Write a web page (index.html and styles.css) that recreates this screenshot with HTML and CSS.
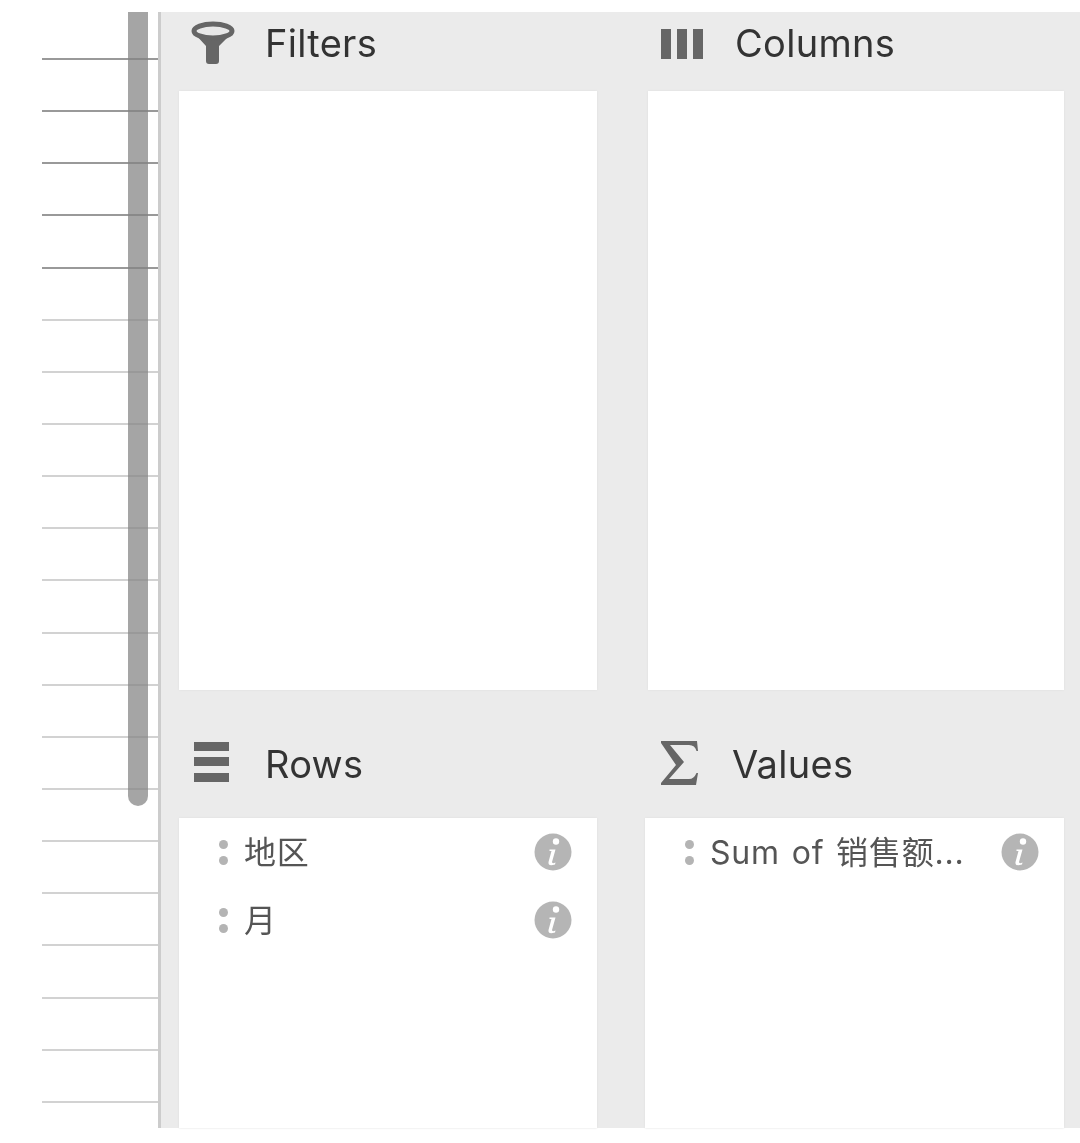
FILE: index.html
```html
<!DOCTYPE html>
<html lang="en">

<head>
    <meta charset="UTF-8">
    <title>Pivot fields</title>
    <link rel="stylesheet" href="styles.css">
</head>

<body>
    <div class="page">
        <div class="sheet">
            <div class="thumb"></div>
            <div class="line dark"></div>
            <div class="line dark"></div>
            <div class="line dark"></div>
            <div class="line dark"></div>
            <div class="line dark"></div>
            <div class="line"></div>
            <div class="line"></div>
            <div class="line"></div>
            <div class="line"></div>
            <div class="line"></div>
            <div class="line"></div>
            <div class="line"></div>
            <div class="line"></div>
            <div class="line"></div>
            <div class="line"></div>
            <div class="line"></div>
            <div class="line"></div>
            <div class="line"></div>
            <div class="line"></div>
            <div class="line"></div>
            <div class="line"></div>
        </div>
        <div class="panel">
            <div class="zone">
                <div class="zone-head">
                    <svg class="icon icon-filter" viewBox="0 0 44 44">
                        <path d="M4 13 L15 25 V40 Q15 43 18 43 H25 Q28 43 28 40 V25 L40 13 Z" fill="#666"/>
                        <ellipse cx="22" cy="10" rx="19" ry="7" fill="#e8e8e8" stroke="#666" stroke-width="5"/>
                    </svg>
                    <span>Filters</span>
                </div>
                <div class="zone-box"></div>
            </div>
            <div class="zone zone-right">
                <div class="zone-head">
                    <svg class="icon icon-columns" viewBox="0 0 42 30" fill="#666">
                        <rect x="0" y="0" width="10" height="30"/>
                        <rect x="16" y="0" width="10" height="30"/>
                        <rect x="32" y="0" width="10" height="30"/>
                    </svg>
                    <span>Columns</span>
                </div>
                <div class="zone-box columns-box"></div>
            </div>
            <div class="zone zone-low">
                <div class="zone-head">
                    <svg class="icon icon-rows" viewBox="0 0 35 40" fill="#666">
                        <rect x="0" y="0" width="35" height="9"/>
                        <rect x="0" y="15" width="35" height="9"/>
                        <rect x="0" y="31" width="35" height="9"/>
                    </svg>
                    <span>Rows</span>
                </div>
                <div class="zone-box">
                    <div class="field">
                        <span class="grip"></span>
                        <span class="field-name">地区</span>
                        <svg class="info" viewBox="0 0 38 38">
                            <circle cx="19" cy="19" r="18.5" fill="#b5b5b5"/>
                            <circle cx="22" cy="8.5" r="3.2" fill="#fff"/>
                            <path d="M15.5 16.5 H21.5 L18 29 Q18 31 21.5 29.5 L21 31.5 Q14 34 14.5 29 L17.5 18 H15.5 Z" fill="#fff"/>
                        </svg>
                    </div>
                    <div class="field">
                        <span class="grip"></span>
                        <span class="field-name">月</span>
                        <svg class="info" viewBox="0 0 38 38">
                            <circle cx="19" cy="19" r="18.5" fill="#b5b5b5"/>
                            <circle cx="22" cy="8.5" r="3.2" fill="#fff"/>
                            <path d="M15.5 16.5 H21.5 L18 29 Q18 31 21.5 29.5 L21 31.5 Q14 34 14.5 29 L17.5 18 H15.5 Z" fill="#fff"/>
                        </svg>
                    </div>
                </div>
            </div>
            <div class="zone zone-low zone-right">
                <div class="zone-head">
                    <svg class="icon icon-sum" viewBox="0 0 38 44">
                        <path d="M0 0 H36 L37 10 H35.5 Q34 4 28 4 H9 L23 21 L8 38 H28 Q33 38 35.5 32 H37 L35 44 H0 V42 L15 24 L0 2 Z" fill="#666"/>
                    </svg>
                    <span>Values</span>
                </div>
                <div class="zone-box">
                    <div class="field">
                        <span class="grip"></span>
                        <span class="field-name">Sum of 销售额...</span>
                        <svg class="info" viewBox="0 0 38 38">
                            <circle cx="19" cy="19" r="18.5" fill="#b5b5b5"/>
                            <circle cx="22" cy="8.5" r="3.2" fill="#fff"/>
                            <path d="M15.5 16.5 H21.5 L18 29 Q18 31 21.5 29.5 L21 31.5 Q14 34 14.5 29 L17.5 18 H15.5 Z" fill="#fff"/>
                        </svg>
                    </div>
                </div>
            </div>
        </div>
    </div>
</body>

</html>
```

FILE: styles.css
```css
* {
    margin: 0;
    padding: 0;
    box-sizing: border-box;
}

html,
body {
    height: 100%;
    background: #fff;
    overflow: hidden;
}

body {
    font-family: Inter, "Noto Sans CJK SC", sans-serif;
}

.page {
    display: flex;
    height: 1116px;
    margin-top: 12px;
    filter: blur(0.5px);
}

.sheet {
    position: relative;
    width: 161px;
    padding: 46px 0 0 42px;
    border-right: 3px solid #ccc;
}

.line {
    height: 2px;
    margin-bottom: 50.15px;
    background: #d2d2d2;
}

.line.dark {
    background: #999;
}

.thumb {
    position: absolute;
    top: 0;
    left: 128px;
    width: 20px;
    height: 794px;
    background: rgba(130, 130, 130, 0.72);
    border-radius: 0 0 10px 10px;
}

.panel {
    flex: 1;
    display: grid;
    grid-template-columns: 418px 419px;
    grid-template-rows: 678px 438px;
    column-gap: 48px;
    padding-left: 18px;
    background: #ebebeb;
}

.zone {
    display: flex;
    flex-direction: column;
}

.zone-low {
    padding-top: 48px;
}

.zone-head {
    display: flex;
    align-items: center;
    height: 79px;
    flex-shrink: 0;
    padding-bottom: 18px;
    font-size: 38px;
    letter-spacing: 0.3px;
    color: #333;
}

.zone-low .zone-head {
    height: 80px;
    padding-bottom: 28px;
}

.zone-box {
    flex: 1;
    background: #fff;
    box-shadow: 0 0 2px #ddd;
}

.columns-box {
    margin-left: 3px;
}

.icon {
    flex-shrink: 0;
}

.icon-filter {
    width: 44px;
    height: 44px;
    margin: 0 30px 0 12px;
}

.icon-columns {
    width: 42px;
    height: 30px;
    margin: 0 32px 0 16px;
    transform: translateY(1px);
}

.icon-rows {
    width: 35px;
    height: 40px;
    margin: 0 36px 0 15px;
    transform: translateY(-2px);
}

.icon-sum {
    width: 38px;
    height: 44px;
    margin: 0 33px 0 16px;
    transform: translateY(-1px);
}

.field {
    display: flex;
    align-items: center;
    height: 68px;
    padding: 0 25px 0 40px;
    font-size: 32px;
    color: #555;
}

.grip {
    position: relative;
    width: 9px;
    height: 25px;
    margin-right: 16px;
    flex-shrink: 0;
}

.grip::before,
.grip::after {
    content: "";
    position: absolute;
    left: 0;
    width: 9px;
    height: 9px;
    border-radius: 50%;
    background: #b4b4b4;
}

.grip::before {
    top: 0;
}

.grip::after {
    bottom: 0;
}

.field-name {
    flex: 1;
    padding-bottom: 4px;
    letter-spacing: 0.8px;
    word-spacing: 2px;
    white-space: nowrap;
}

.info {
    width: 38px;
    height: 38px;
    flex-shrink: 0;
}
```
